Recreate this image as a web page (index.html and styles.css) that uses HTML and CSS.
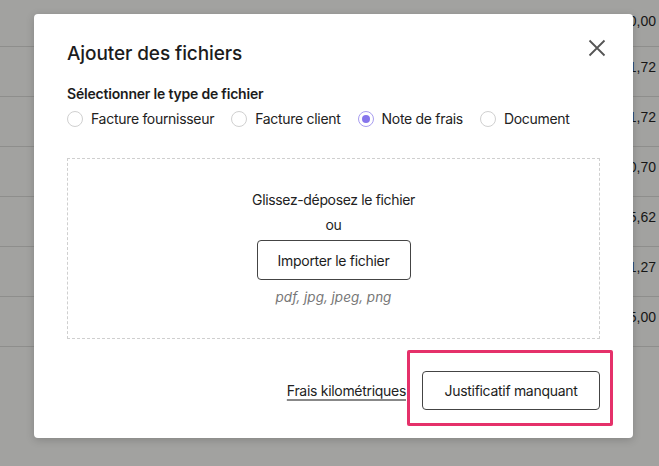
FILE: index.html
```html
<!DOCTYPE html>
<html lang="fr">
<head>
<meta charset="utf-8">
<link rel="stylesheet" href="styles.css">
</head>
<body>
<div class="page">
  <div class="row"><span class="amt">1 250,00</span></div>
  <div class="row"><span class="amt">1 331,72</span></div>
  <div class="row"><span class="amt">1 331,72</span></div>
  <div class="row"><span class="amt">1 240,70</span></div>
  <div class="row"><span class="amt">1 235,62</span></div>
  <div class="row"><span class="amt">1 331,27</span></div>
  <div class="row"><span class="amt">1 235,00</span></div>
</div>
<div class="modal">
  <div class="head">
    <h1 class="title">Ajouter des fichiers</h1>
    <svg class="close" width="18" height="18" viewBox="0 0 18 18"><path d="M1.5 1.5L16.5 16.5M16.5 1.5L1.5 16.5" stroke="#555" stroke-width="1.8" fill="none"/></svg>
  </div>
  <div class="label">Sélectionner le type de fichier</div>
  <div class="radios">
    <div class="radio"><span class="dot"></span>Facture fournisseur</div>
    <div class="radio"><span class="dot"></span>Facture client</div>
    <div class="radio"><span class="dot on"></span>Note de frais</div>
    <div class="radio"><span class="dot"></span>Document</div>
  </div>
  <div class="drop">
    <div class="drop-text">Glissez-déposez le fichier</div>
    <div class="drop-or">ou</div>
    <button class="btn import">Importer le fichier</button>
    <div class="formats">pdf, jpg, jpeg, png</div>
  </div>
  <div class="foot">
    <a class="link" href="#">Frais kilométriques</a>
    <button class="btn missing">Justificatif manquant</button>
  </div>
</div>
</body>
</html>
```
FILE: styles.css
```css
html, body {
  margin: 0;
  padding: 0;
}
body {
  width: 659px;
  height: 466px;
  overflow: hidden;
  background: #a2a2a0;
  font-family: Inter, "Noto Sans", sans-serif;
  color: #1d1d1d;
  position: relative;
}
.page {
  display: flex;
  flex-direction: column;
}
.row {
  height: 50px;
  border-bottom: 1px solid #8e8e8c;
  box-sizing: border-box;
  display: flex;
  justify-content: flex-end;
  align-items: flex-start;
  padding: 12px 3px 0 0;
  font-family: "Liberation Sans", Arial, sans-serif;
  font-size: 14px;
  color: #161616;
}
.row:first-child {
  height: 47px;
  padding-top: 13px;
}
.modal {
  position: absolute;
  left: 34px;
  top: 14px;
  width: 599px;
  height: 424px;
  box-sizing: border-box;
  background: #fff;
  border-radius: 4px;
  box-shadow: 0 2px 8px rgba(0, 0, 0, 0.18);
  padding: 28px 33px 0 33px;
  display: flex;
  flex-direction: column;
  letter-spacing: -0.3px;
}
.head {
  display: flex;
  justify-content: space-between;
  align-items: center;
  height: 22px;
}
.title {
  margin: 0;
  font-size: 19px;
  font-weight: 500;
  color: #1c1c1c;
  letter-spacing: -0.1px;
}
.close {
  margin-right: -6px;
  margin-top: -10px;
}
.label {
  margin-top: 21px;
  font-size: 14px;
  font-weight: 600;
  color: #1c1c1c;
  line-height: 18px;
  letter-spacing: -0.2px;
}
.radios {
  display: flex;
  gap: 17px;
  margin-top: 7px;
  font-size: 14px;
  line-height: 18px;
}
.radio {
  display: flex;
  align-items: center;
  gap: 8px;
  color: #222;
}
.dot {
  width: 14px;
  height: 14px;
  border: 1px solid #d0d0d0;
  border-radius: 50%;
  box-sizing: content-box;
  position: relative;
}
.dot.on {
  border-color: #a89df0;
}
.dot.on::after {
  content: "";
  position: absolute;
  left: 3px;
  top: 3px;
  width: 8px;
  height: 8px;
  border-radius: 50%;
  background: #8675ec;
}
.drop {
  margin-top: 30px;
  height: 181px;
  box-sizing: border-box;
  border: 1px dashed #cfcfcf;
  display: flex;
  flex-direction: column;
  align-items: center;
  padding-top: 32px;
  font-size: 14px;
}
.drop-text {
  line-height: 18px;
  color: #222;
  letter-spacing: -0.35px;
}
.drop-or {
  margin-top: 7px;
  line-height: 18px;
}
.btn {
  font-family: inherit;
  font-size: 14px;
  letter-spacing: -0.3px;
  color: #1c1c1c;
  background: #fff;
  border: 1px solid #444;
  border-radius: 4px;
  cursor: pointer;
}
.import {
  margin-top: 6px;
  width: 154px;
  height: 40px;
}
.formats {
  margin-top: 9px;
  font-size: 13.5px;
  font-style: italic;
  color: #777;
  line-height: 16px;
  letter-spacing: 0;
}
.foot {
  margin-top: 32px;
  display: flex;
  justify-content: flex-end;
  align-items: center;
  gap: 16px;
}
.link {
  font-size: 14px;
  color: #222;
  text-decoration: underline;
  text-decoration-color: #888;
  text-underline-offset: 3px;
  text-decoration-thickness: 2px;
}
.missing {
  width: 178px;
  height: 39px;
  position: relative;
}
.missing::after {
  content: "";
  position: absolute;
  left: -16px;
  right: -14px;
  top: -22px;
  bottom: -17px;
  border: 3px solid #e5316a;
  border-radius: 2px;
}
```
